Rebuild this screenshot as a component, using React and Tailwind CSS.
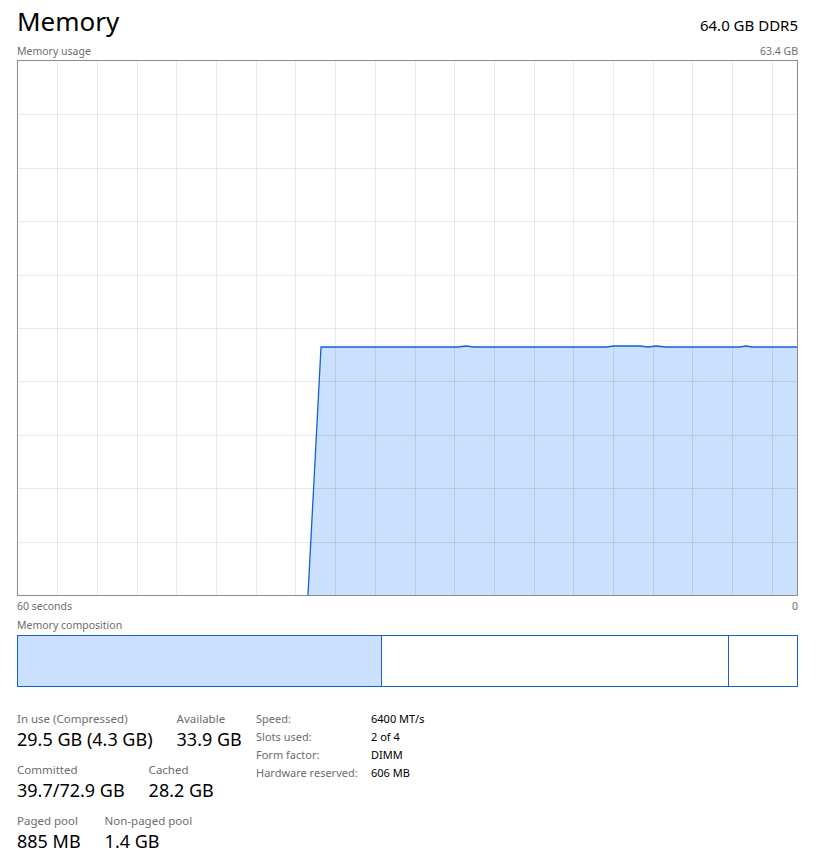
const W = 779;
const H = 534;

const vLines = Array.from({ length: 19 }, (_, k) => Math.round(39.3 + 39.69 * k) + 0.5);
const hLines = Array.from({ length: 9 }, (_, k) => Math.round(53.4 * (k + 1)) + 0.5);

const top = 286;
const trace = [
  [290, H],
  [303, top],
  [440, top],
  [448, top - 1],
  [456, top],
  [588, top],
  [596, top - 1],
  [622, top - 1],
  [630, top],
  [638, top - 1],
  [648, top],
  [722, top],
  [728, top - 1],
  [734, top],
  [W, top],
];

function UsageChart() {
  const line = trace.map(([x, y]) => `${x},${y}`).join(" ");
  const area = `${line} ${W},${H}`;
  return (
    <div className="border border-[#8b8b8b] w-[781px] h-[536px]">
      <svg width={W} height={H} viewBox={`0 0 ${W} ${H}`} className="block">
        <polygon points={area} fill="#cbe0fc" />
        {vLines.map((x) => (
          <line key={"v" + x} x1={x} y1={0} x2={x} y2={H} stroke="rgba(0,0,0,0.085)" strokeWidth="1" shapeRendering="crispEdges" />
        ))}
        {hLines.map((y) => (
          <line key={"h" + y} x1={0} y1={y} x2={W} y2={y} stroke="rgba(0,0,0,0.085)" strokeWidth="1" shapeRendering="crispEdges" />
        ))}
        <polyline points={line} fill="none" stroke="#1560d4" strokeWidth="1.3" />
      </svg>
    </div>
  );
}

function Stat({ label, value }) {
  return (
    <div>
      <div className="text-[11.5px] leading-[17px] text-[#6d6d6d]">{label}</div>
      <div className="text-[18px] leading-[24px] text-black">{value}</div>
    </div>
  );
}

const specs = [
  ["Speed:", "6400 MT/s"],
  ["Slots used:", "2 of 4"],
  ["Form factor:", "DIMM"],
  ["Hardware reserved:", "606 MB"],
];

export default function App() {
  return (
    <div className="w-[816px] h-[863px] bg-white pl-[17px] pr-[19px] font-['Segoe_UI','Noto_Sans',sans-serif] overflow-hidden">
      <div className="flex items-end justify-between pt-[3px]">
        <h1 className="text-[26px] leading-[36px] text-black">Memory</h1>
        <div className="text-[15px] leading-[24px] text-black pb-[2px] -mr-[1px]">64.0 GB DDR5</div>
      </div>
      <div className="flex justify-between text-[10.5px] leading-[17px] text-[#6d6d6d] mt-[4px] w-[781px]">
        <span>Memory usage</span>
        <span>63.4 GB</span>
      </div>
      <UsageChart />
      <div className="flex justify-between text-[10.5px] leading-[16px] text-[#6d6d6d] mt-[2px] w-[781px]">
        <span>60 seconds</span>
        <span>0</span>
      </div>
      <div className="text-[10.5px] leading-[16px] text-[#6d6d6d] mt-[3px]">Memory composition</div>
      <div className="mt-[2px] flex h-[52px] w-[781px] border border-[#1560d4]">
        <div className="w-[363px] bg-[#cbe0fc]" />
        <div className="w-[347px] border-l border-[#1560d4]" />
        <div className="flex-1 border-l border-[#1560d4]" />
      </div>
      <div className="mt-[23px] flex">
        <div className="w-[239px] flex flex-col gap-[10px]">
          <div className="flex gap-[24px]">
            <Stat label="In use (Compressed)" value="29.5 GB (4.3 GB)" />
            <Stat label="Available" value="33.9 GB" />
          </div>
          <div className="flex gap-[24px]">
            <Stat label="Committed" value="39.7/72.9 GB" />
            <Stat label="Cached" value="28.2 GB" />
          </div>
          <div className="flex gap-[24px]">
            <Stat label="Paged pool" value="885 MB" />
            <Stat label="Non-paged pool" value="1.4 GB" />
          </div>
        </div>
        <div className="flex flex-col text-[11px] leading-[18px]">
          {specs.map(([k, v]) => (
            <div key={k} className="flex">
              <span className="w-[115px] text-[#6d6d6d]">{k}</span>
              <span className="text-black">{v}</span>
            </div>
          ))}
        </div>
      </div>
    </div>
  );
}
